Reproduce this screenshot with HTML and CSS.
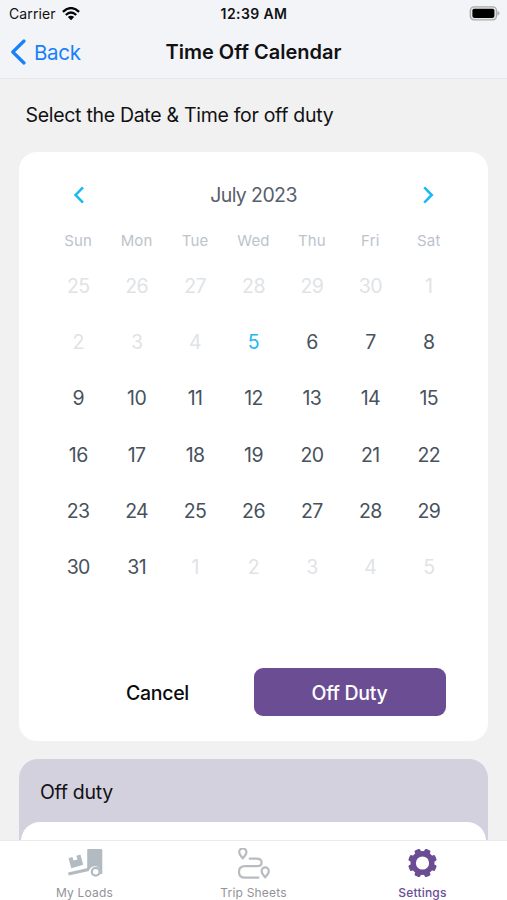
FILE: index.html
```html
<!DOCTYPE html>
<html lang="en">
<head>
<meta charset="utf-8">
<title>Time Off Calendar</title>
<link rel="stylesheet" href="styles.css">
</head>
<body>
<div class="app">
  <header class="header">
    <div class="status">
      <div class="carrier"><span>Carrier</span>
        <svg width="18" height="14" viewBox="0 0 18 14" fill="none" stroke="#050505" stroke-width="2.3"><path d="M.9 4.9Q9-2.7 17.1 4.9M3.8 8Q9 3.1 14.2 8"/><path d="M9 13.2L5.8 10.1Q9 7.5 12.2 10.1Z" fill="#050505" stroke="none"/></svg>
      </div>
      <time class="clock">12:39 AM</time>
      <svg class="battery" width="31" height="15" viewBox="0 0 31 15"><rect x="1.3" y=".8" width="26.2" height="13" rx="3.7" fill="#e6e6e8" stroke="#aaabad" stroke-width="1.3"/><rect x="3.4" y="2.7" width="22" height="9.2" rx="1.8"/><path d="M28.5 5Q30.5 5.5 30.5 7.3T28.5 9.7Z" fill="#aaabad"/></svg>
    </div>
    <div class="nav">
      <a class="back"><svg width="16" height="26" viewBox="0 0 16 26" fill="none" stroke="#1681fa" stroke-width="3.2" stroke-linecap="round" stroke-linejoin="round"><path d="M14 2L2.8 13L14 24"/></svg><span>Back</span></a>
      <h1>Time Off Calendar</h1>
    </div>
  </header>
  <main class="content">
    <p class="prompt">Select the Date &amp; Time for off duty</p>
    <section class="card">
      <div class="month">
        <svg width="12" height="18" viewBox="0 0 12 18" fill="none" stroke="#18b9f2" stroke-width="2.5"><path d="M11 1.3L3.6 9L11 16.7"/></svg>
        <h2>July 2023</h2>
        <svg width="12" height="18" viewBox="0 0 12 18" fill="none" stroke="#18b9f2" stroke-width="2.5"><path d="M1.2 1.3L8.8 9L1.2 16.7"/></svg>
      </div>
      <div class="grid weekdays"><span>Sun</span><span>Mon</span><span>Tue</span><span>Wed</span><span>Thu</span><span>Fri</span><span>Sat</span></div>
      <div class="grid days">
        <span class="off">25</span><span class="off">26</span><span class="off">27</span><span class="off">28</span><span class="off">29</span><span class="off">30</span><span class="off">1</span>
        <span class="off">2</span><span class="off">3</span><span class="off">4</span><span class="today">5</span><span>6</span><span>7</span><span>8</span>
        <span>9</span><span>10</span><span>11</span><span>12</span><span>13</span><span>14</span><span>15</span>
        <span>16</span><span>17</span><span>18</span><span>19</span><span>20</span><span>21</span><span>22</span>
        <span>23</span><span>24</span><span>25</span><span>26</span><span>27</span><span>28</span><span>29</span>
        <span>30</span><span>31</span><span class="off">1</span><span class="off">2</span><span class="off">3</span><span class="off">4</span><span class="off">5</span>
      </div>
      <div class="actions"><button class="cancel">Cancel</button><button class="primary">Off Duty</button></div>
    </section>
    <section class="duty"><h3>Off duty</h3><div class="duty-body"></div></section>
  </main>
  <nav class="tabs">
    <a class="tab"><svg width="36" height="34" viewBox="0 0 36 34"><g fill="#b3bbc2"><path d="M20.2 2Q20.2 1 21.2 1H34Q35.3 1 35.3 2.3V26H32.8A5.4 5.4 0 0 0 22.6 21.4L20.2 22Z"/><path d="M1.5 10.2L5.4 9L6.6 12.6L10.5 11.4L9.4 7.7L13.4 6.6L16.2 16.8L4.3 20.2Z"/><path d="M1 24.5L22 19.7V22.9L1.8 27.5Z"/></g><circle cx="28.7" cy="23.7" r="3.9" fill="#fff" stroke="#b3bbc2" stroke-width="2.3"/></svg><span>My Loads</span></a>
    <a class="tab"><svg width="36" height="34" viewBox="0 0 36 34" fill="none" stroke="#b8bbbf"><path d="M13.7 10.6H20.5Q25.6 10.6 25.6 14.4T20.5 18.2H9Q3 18.2 3 23.9T9 29.6H22.5" stroke-width="2.2" stroke-linecap="round"/><path d="M6.8 10.2Q3.2 6.4 3.2 4A3.6 3.6 0 0 1 10.4 4Q10.4 6.4 6.8 10.2ZM29.2 29.2Q25.6 25.4 25.6 23A3.6 3.6 0 0 1 32.8 23Q32.8 25.4 29.2 29.2Z" stroke-width="2.2"/></svg><span>Trip Sheets</span></a>
    <a class="tab active"><svg width="30" height="30" viewBox="-14.5 -15 30 30" fill="#6b4d94"><defs><rect id="tooth" x="-3.1" y="-14.4" width="6.2" height="6" rx="1.5"/></defs><circle r="9.3" fill="none" stroke="#6b4d94" stroke-width="5.4"/><g transform="rotate(22.5)"><use href="#tooth"/><use href="#tooth" transform="rotate(45)"/><use href="#tooth" transform="rotate(90)"/><use href="#tooth" transform="rotate(135)"/><use href="#tooth" transform="rotate(180)"/><use href="#tooth" transform="rotate(225)"/><use href="#tooth" transform="rotate(270)"/><use href="#tooth" transform="rotate(315)"/></g></svg><span>Settings</span></a>
  </nav>
</div>
</body>
</html>
```
FILE: styles.css
```css
* { box-sizing: border-box; }
body { margin: 0; font-family: Inter, sans-serif; color: #111114; }
h1, h2, h3, p { margin: 0; font-weight: 400; }
.app { display: flex; flex-direction: column; height: 900px; overflow: hidden; background: #f1f1f1; }
.header { flex: none; height: 79px; background: #f3f4f7; border-bottom: 1px solid #e8e8ea; }
.status { display: grid; grid-template-columns: 1fr auto 1fr; align-items: center; height: 27px; padding: 0 7px 0 9px; font-size: 14px; }
.carrier { display: flex; align-items: center; gap: 6px; letter-spacing: .1px; }
.clock { font-weight: 600; letter-spacing: .4px; margin-left: -1px; }
.battery { justify-self: end; }
.nav { display: grid; grid-template-columns: 1fr auto 1fr; align-items: center; height: 50px; padding: 0 10px; }
.back { display: flex; align-items: center; gap: 8px; color: #1681fa; font-size: 20.5px; letter-spacing: -.3px; }
h1 { font-size: 20px; font-weight: 600; letter-spacing: 0; }
.content { flex: 1; min-height: 0; overflow: hidden; padding: 0 19px; }
.prompt { height: 73px; padding: 24px 6.5px 0; font-size: 19.5px; line-height: 25px; letter-spacing: -.3px; }
.card { height: 589px; padding: 30px 30px 0; border-radius: 18px; background: #fff; }
.month { display: flex; align-items: center; justify-content: space-between; height: 26px; padding: 0 23px; }
h2 { font-size: 19.5px; color: #56606c; letter-spacing: -.6px; font-weight: 370; }
.grid { display: grid; grid-template-columns: repeat(7, 1fr); text-align: center; }
.weekdays { margin-top: 22px; height: 22px; line-height: 22px; font-size: 15px; color: #bcc3cc; letter-spacing: .2px; }
.days { margin-top: 6px; grid-auto-rows: 56.2px; line-height: 56px; font-size: 19.5px; color: #47525d; letter-spacing: -.6px; font-weight: 370; }
.off { color: #dfe3e6; }
.today { color: #22b9ee; }
.actions { display: grid; grid-template-columns: 192px 192px; justify-content: center; margin-top: 73px; }
.actions button { height: 48px; padding: 2px 0 0; border: 0; border-radius: 9px; background: none; font: 500 19.5px Inter, sans-serif; letter-spacing: -.3px; color: #0b0b0d; }
.actions .primary { background: #6b4d94; color: #fff; }
.duty { margin-top: 18px; height: 160px; padding: 0 2px; background: #d4d1df; border-radius: 19px; }
h3 { height: 63px; padding-left: 19px; line-height: 66px; font-size: 19.5px; letter-spacing: -.3px; }
.duty-body { height: 90px; border-radius: 19px; background: #fff; }
.tabs { flex: none; display: grid; grid-template-columns: repeat(3, 1fr); height: 60px; border-top: 1px solid #ebebed; background: #fff; }
.tab { display: flex; flex-direction: column; align-items: center; padding-top: 7px; color: #929297; font-size: 12px; letter-spacing: .2px; }
.tab svg { flex: none; height: 34px; margin-bottom: 3px; }
.tab span { line-height: 15px; }
.active { color: #6b4d94; font-weight: 500; }
.active svg { height: 30px; margin-bottom: 7px; }
```
